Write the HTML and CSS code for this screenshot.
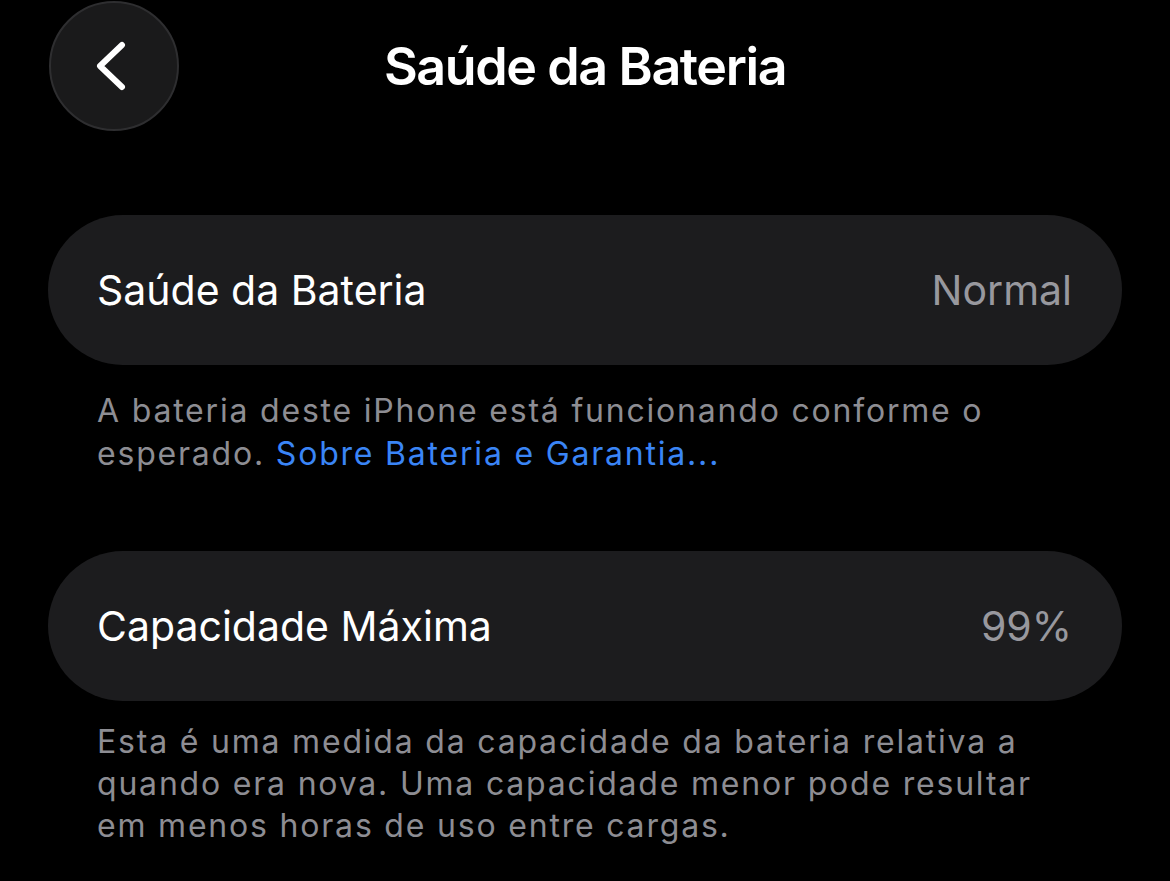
FILE: index.html
```html
<!DOCTYPE html>
<html lang="pt">
<head>
    <meta charset="UTF-8">
    <title>Saúde da Bateria</title>
    <link rel="stylesheet" href="styles.css">
</head>
<body>
    <div class="tela">
        <div class="topo">
            <button class="voltar" aria-label="Voltar">
                <svg width="40" height="50" viewBox="0 0 40 50">
                    <path d="M31 4 L9 25 L31 46" fill="none" stroke="#fff" stroke-width="6" stroke-linecap="round" stroke-linejoin="round"/>
                </svg>
            </button>
            <h1 class="titulo">Saúde da Bateria</h1>
            <div></div>
        </div>

        <div class="grupo primeiro">
            <div class="celula">
                <span class="rotulo">Saúde da Bateria</span>
                <span class="valor">Normal</span>
            </div>
            <p class="nota">A bateria deste iPhone está funcionando conforme o<br>esperado. <a href="#">Sobre Bateria e Garantia...</a></p>
        </div>

        <div class="grupo">
            <div class="celula">
                <span class="rotulo">Capacidade Máxima</span>
                <span class="valor">99%</span>
            </div>
            <p class="nota">Esta é uma medida da capacidade da bateria relativa a<br>quando era nova. Uma capacidade menor pode resultar<br>em menos horas de uso entre cargas.</p>
        </div>
    </div>
</body>
</html>
```

FILE: styles.css
```css
body {
    margin: 0;
    background: #000;
    font-family: Inter, "Noto Sans", sans-serif;
    color: #fff;
}

.tela {
    width: 1170px;
    height: 881px;
    overflow: hidden;
}

/* barra de cima */
.topo {
    display: grid;
    grid-template-columns: 1fr auto 1fr;
    align-items: center;
    padding: 1px 0 0 49px;
    height: 130px;
}

.voltar {
    width: 130px;
    height: 130px;
    border-radius: 50%;
    background: #1a1a1b;
    border: 2px solid #2e2e30;
    display: flex;
    align-items: center;
    justify-content: center;
    padding: 0 6px 0 0;
}

.titulo {
    margin: 0 0 0 -49px;
    font-size: 52px;
    font-weight: 600;
    letter-spacing: -1.4px;
}

/* grupos */
.grupo {
    padding: 0 48px;
    margin-top: 76px;
}

.grupo.primeiro {
    margin-top: 84px;
}

.celula {
    height: 150px;
    border-radius: 75px;
    background: #1c1c1e;
    display: flex;
    align-items: center;
    justify-content: space-between;
    padding: 0 50px 0 49px;
    font-size: 41px;
}

.valor {
    color: #98989e;
}

.nota {
    margin: 24px 0 0 49px;
    font-size: 32px;
    line-height: 43px;
    color: #8d8d93;
    letter-spacing: 1.8px;
}

.grupo + .grupo .nota {
    margin-top: 20px;
    line-height: 42px;
}

.nota a {
    color: #3a85f6;
    text-decoration: none;
}
```
